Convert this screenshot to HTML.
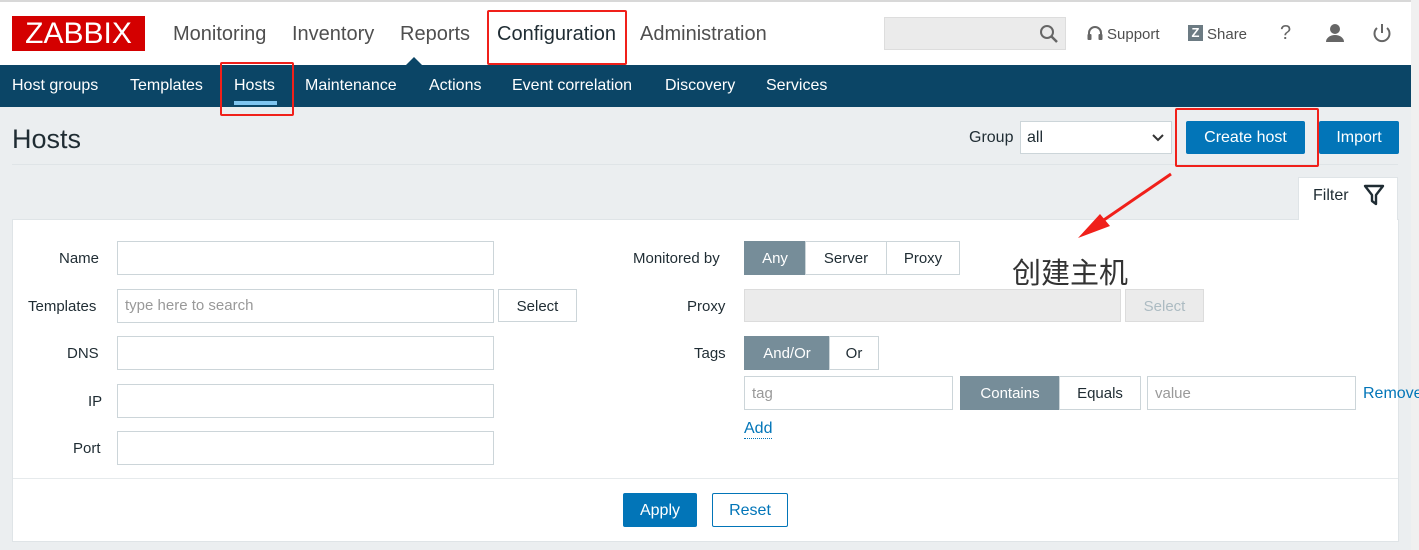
<!DOCTYPE html>
<html><head><meta charset="utf-8"><style>
*{box-sizing:border-box;margin:0;padding:0}
body{width:1419px;height:550px;overflow:hidden;background:#ebeef0;font-family:"Liberation Sans",Arial,sans-serif;position:relative;color:#1f2c33}
.a{position:absolute}
.t{font-size:15px;white-space:nowrap}
.inp{position:absolute;background:#fff;border:1px solid #ccd5d9;height:34px;font-size:15px;color:#999;padding:8px 7px}
.btn{position:absolute;background:#fff;border:1px solid #ccd5d9;height:34px;font-size:15px;text-align:center;line-height:33px;color:#1f2c33}
.sel{background:#768d99;color:#fff;border-color:#768d99}
.red{position:absolute;border:2px solid #f0201a;border-radius:2px}
</style></head><body>
<div class="a" style="left:0;top:0;width:1419px;height:65px;background:#fff;border-top:2px solid #d8d8d8"></div>
<div class="a" style="left:1411px;top:0;width:8px;height:550px;background:#f0f0f0"></div>
<div class="a" style="left:12px;top:16px;width:133px;height:35px;background:#d40000;color:#fff;font-size:30px;line-height:36px;text-align:center;letter-spacing:0">ZABBIX</div>
<div class="a t" style="left:173px;top:23px;font-size:20px;color:#4f4f4f">Monitoring</div>
<div class="a t" style="left:292px;top:23px;font-size:20px;color:#4f4f4f">Inventory</div>
<div class="a t" style="left:400px;top:23px;font-size:20px;color:#4f4f4f">Reports</div>
<div class="a t" style="left:497px;top:23px;font-size:20px;color:#1f2c33">Configuration</div>
<div class="a t" style="left:640px;top:23px;font-size:20px;color:#4f4f4f">Administration</div>
<div class="a" style="left:406px;top:57px;width:0;height:0;border:8px solid transparent;border-bottom-color:#0b4566;border-top:0"></div>
<div class="red" style="left:487px;top:10px;width:140px;height:55px"></div>
<div class="a" style="left:884px;top:17px;width:182px;height:33px;background:#ebebeb;border:1px solid #ddd"></div>
<svg class="a" style="left:1039px;top:24px" width="20" height="20"><circle cx="8" cy="8" r="6" fill="none" stroke="#666" stroke-width="2"/><path d="M12 12l6 6" stroke="#666" stroke-width="2.5"/></svg>
<svg class="a" style="left:1086px;top:25px" width="18" height="18"><path d="M3 11V8a6 6 0 0 1 12 0v3" fill="none" stroke="#666" stroke-width="2"/><rect x="1.5" y="9" width="4" height="6" rx="1" fill="#666"/><rect x="12.5" y="9" width="4" height="6" rx="1" fill="#666"/></svg>
<div class="a t" style="left:1107px;top:26px;color:#4f4f4f">Support</div>
<div class="a" style="left:1188px;top:25px;width:15px;height:16px;background:#6c7b83;color:#fff;font-size:13px;font-weight:bold;text-align:center;line-height:16px">Z</div>
<div class="a t" style="left:1207px;top:26px;color:#4f4f4f">Share</div>
<div class="a t" style="left:1280px;top:22px;font-size:20px;color:#666">?</div>
<svg class="a" style="left:1325px;top:23px" width="20" height="20"><circle cx="10" cy="6" r="5" fill="#666"/><path d="M1 19a9 7 0 0 1 18 0z" fill="#666"/></svg>
<svg class="a" style="left:1372px;top:23px" width="20" height="20"><path d="M5 5a7.5 7.5 0 1 0 10 0" fill="none" stroke="#666" stroke-width="2"/><path d="M10 1v9" stroke="#666" stroke-width="2"/></svg>
<div class="a" style="left:0;top:65px;width:1411px;height:42px;background:#0b4566"></div>
<div class="a t" style="left:12px;top:77px;font-size:16px;color:#fff">Host groups</div>
<div class="a t" style="left:130px;top:77px;font-size:16px;color:#fff">Templates</div>
<div class="a t" style="left:234px;top:77px;font-size:16px;color:#fff">Hosts</div>
<div class="a" style="left:234px;top:101px;width:43px;height:4px;background:#7fc5f0"></div>
<div class="a t" style="left:305px;top:77px;font-size:16px;color:#fff">Maintenance</div>
<div class="a t" style="left:429px;top:77px;font-size:16px;color:#fff">Actions</div>
<div class="a t" style="left:512px;top:77px;font-size:16px;color:#fff">Event correlation</div>
<div class="a t" style="left:665px;top:77px;font-size:16px;color:#fff">Discovery</div>
<div class="a t" style="left:766px;top:77px;font-size:16px;color:#fff">Services</div>
<div class="red" style="left:220px;top:62px;width:74px;height:54px"></div>
<div class="a t" style="left:12px;top:124px;font-size:27px">Hosts</div>
<div class="a" style="left:12px;top:164px;width:1386px;height:1px;background:#dfe4e7"></div>
<div class="a t" style="left:969px;top:129px;font-size:16px">Group</div>
<div class="a" style="left:1020px;top:121px;width:152px;height:33px;background:#fff;border:1px solid #ccd5d9;font-size:16px;padding:7px 6px">all</div>
<svg class="a" style="left:1151px;top:133px" width="14" height="10"><path d="M2 2l5 5 5-5" fill="none" stroke="#333" stroke-width="2"/></svg>
<div class="a" style="left:1186px;top:121px;width:119px;height:33px;background:#0275b8;color:#fff;font-size:16px;text-align:center;line-height:33px;border-radius:2px">Create host</div>
<div class="a" style="left:1319px;top:121px;width:80px;height:33px;background:#0275b8;color:#fff;font-size:16px;text-align:center;line-height:33px;border-radius:2px">Import</div>
<div class="red" style="left:1175px;top:108px;width:144px;height:59px"></div>
<div class="a" style="left:1298px;top:177px;width:100px;height:44px;background:#fff;border:1px solid #dfe4e7;border-bottom:0"></div>
<div class="a t" style="left:1313px;top:187px;font-size:16px">Filter</div>
<svg class="a" style="left:1363px;top:184px" width="22" height="22"><path d="M2 2h18l-7 9v9l-4-3v-6z" fill="none" stroke="#1f2c33" stroke-width="2.4" stroke-linejoin="round"/></svg>
<div class="a" style="left:12px;top:219px;width:1387px;height:323px;background:#fff;border:1px solid #dfe4e7"></div>
<div class="a" style="left:1299px;top:218px;width:98px;height:3px;background:#fff"></div>
<div class="a" style="left:13px;top:478px;width:1385px;height:1px;background:#e6eaec"></div>
<svg class="a" style="left:1070px;top:170px" width="110" height="72"><path d="M101 4L28 54" stroke="#f0201a" stroke-width="3"/><path d="M8 68L30 44L40 56z" fill="#f0201a"/></svg>
<div class="a t" style="left:59px;top:250px">Name</div>
<div class="inp" style="left:117px;top:241px;width:377px"></div>
<div class="a t" style="left:28px;top:298px">Templates</div>
<div class="inp" style="left:117px;top:289px;width:377px;padding:7px 7px">type here to search</div>
<div class="btn" style="left:498px;top:289px;width:79px;height:33px">Select</div>
<div class="a t" style="left:67px;top:345px">DNS</div>
<div class="inp" style="left:117px;top:336px;width:377px"></div>
<div class="a t" style="left:88px;top:393px">IP</div>
<div class="inp" style="left:117px;top:384px;width:377px"></div>
<div class="a t" style="left:73px;top:440px">Port</div>
<div class="inp" style="left:117px;top:431px;width:377px"></div>
<div class="a t" style="left:633px;top:250px">Monitored by</div>
<div class="btn sel" style="left:744px;top:241px;width:62px">Any</div>
<div class="btn" style="left:805px;top:241px;width:82px">Server</div>
<div class="btn" style="left:886px;top:241px;width:74px">Proxy</div>
<div class="a t" style="left:1012px;top:250px;font-size:29px;font-family:'Noto Sans CJK SC',sans-serif;color:#333">创建主机</div>
<div class="a t" style="left:687px;top:298px">Proxy</div>
<div class="a" style="left:744px;top:289px;width:377px;height:33px;background:#ebebeb;border:1px solid #dcdcdc"></div>
<div class="btn" style="left:1125px;top:289px;width:79px;height:33px;background:#ebebeb;color:#acbbc2;border-color:#dcdcdc">Select</div>
<div class="a t" style="left:694px;top:345px">Tags</div>
<div class="btn sel" style="left:744px;top:336px;width:86px">And/Or</div>
<div class="btn" style="left:829px;top:336px;width:50px">Or</div>
<div class="inp" style="left:744px;top:376px;width:209px">tag</div>
<div class="btn sel" style="left:960px;top:376px;width:100px">Contains</div>
<div class="btn" style="left:1059px;top:376px;width:82px">Equals</div>
<div class="inp" style="left:1147px;top:376px;width:209px">value</div>
<div class="a t" style="left:1363px;top:385px;color:#0275b8;font-size:16px">Remove</div>
<div class="a t" style="left:744px;top:420px;color:#0275b8;font-size:16px;border-bottom:1px dotted #0275b8">Add</div>
<div class="a" style="left:623px;top:493px;width:74px;height:34px;background:#0275b8;color:#fff;font-size:16px;text-align:center;line-height:35px;border-radius:2px">Apply</div>
<div class="a" style="left:712px;top:493px;width:76px;height:34px;background:#fff;border:1px solid #0275b8;color:#0275b8;font-size:16px;text-align:center;line-height:33px;border-radius:2px">Reset</div>
</body></html>
